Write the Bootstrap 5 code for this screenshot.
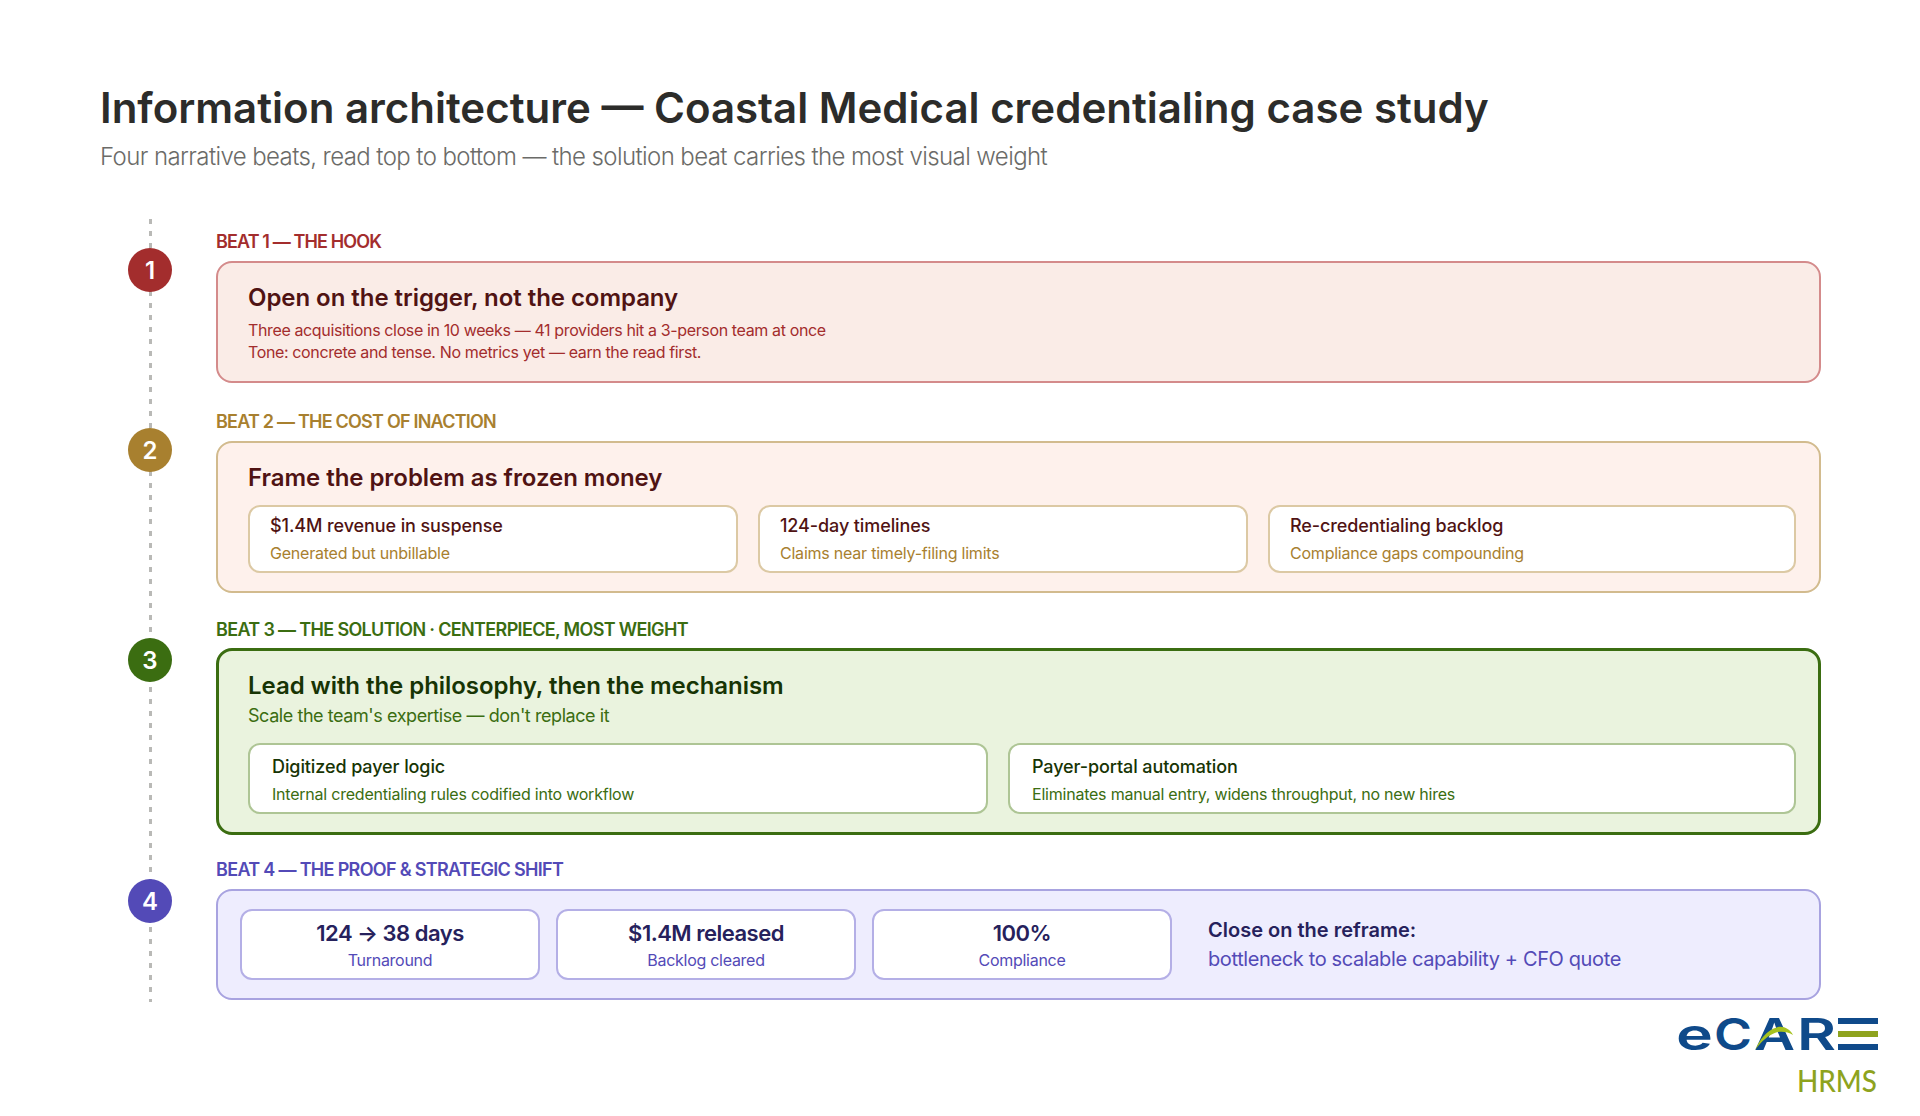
<!DOCTYPE html>
<html lang="en">
<head>
    <meta charset="UTF-8">
    <meta name="viewport" content="width=device-width, initial-scale=1.0">
    <title>Information architecture</title>
    <link href="https://cdn.jsdelivr.net/npm/bootstrap@5.3.0/dist/css/bootstrap.min.css" rel="stylesheet">
    <style>
        body { font-family: "Inter", "Liberation Sans", sans-serif; background: #fff; overflow: hidden; }
        .ia-page { padding: 84px 99px 0 100px; }
        .ia-title { font-size: 42px; line-height: 48px; font-weight: 600; color: #2c2c2a; margin: 0 0 9px; }
        .ia-sub { font-size: 24px; line-height: 32px; font-weight: 300; letter-spacing: -.6px; color: #6b6b68; margin: 0 0 46px; }
        .ia-track { padding: 11px 0 2px; }
        .ia-track::before { content: ""; position: absolute; left: 48.5px; top: 0; bottom: 0; width: 3px; background: repeating-linear-gradient(#b9b9b6 0 5px, transparent 5px 12px); }
        .beat-rail { width: 116px; flex: none; position: relative; }
        .beat-dot { width: 44px; height: 44px; margin-left: 28px; border-radius: 50%; color: #fff; font-size: 24px; font-weight: 600; padding-top: 1px; }
        .beat-label { font-size: 18px; line-height: 24px; font-weight: 600; }
        .beat-box { border-radius: 16px; border: 2px solid; }
        .beat-head { font-size: 24px; line-height: 32px; font-weight: 600; letter-spacing: -.05px; margin: 0; }
        .beat-copy { font-size: 16px; line-height: 22px; letter-spacing: -.37px; }
        .fact-tile { background: #fff; border: 2px solid; border-radius: 12px; }
        .fact-name { font-size: 18px; line-height: 24px; font-weight: 500; letter-spacing: -.1px; }
        .fact-note { font-size: 16px; line-height: 22px; margin-top: 4px; letter-spacing: -.22px; }

        .beat-hook { color: #a32d2d; }
        .beat-hook .beat-dot { background: #a32d2d; margin-top: 18px; }
        .beat-hook .beat-label { margin-bottom: 7px; letter-spacing: -.87px; }
        .beat-hook .beat-box { background: #faece7; border-color: #d48b8b; padding: 19px 30px 18px; }
        .beat-hook .beat-head { color: #501313; margin-bottom: 5px; }

        .beat-cost { color: #a8802f; margin-top: 27px; }
        .beat-cost .beat-dot { background: #a8802f; margin-top: 18px; }
        .beat-cost .beat-label { margin-bottom: 7px; letter-spacing: -.78px; }
        .beat-cost .beat-box { background: #fef1ec; border-color: #d2bb8e; padding: 19px 23px 18px 30px; }
        .beat-cost .beat-head { color: #501313; margin-bottom: 11px; }
        .beat-cost .fact-row { display: grid; grid-template-columns: 490px 490px 1fr; gap: 20px; }
        .beat-cost .fact-tile { border-color: #dcc9a4; padding: 7px 20px; }
        .beat-cost .fact-name { color: #501313; }

        .beat-fix { color: #3b6d11; margin-top: 25px; }
        .beat-fix .beat-dot { background: #3b6d11; margin-top: 20px; }
        .beat-fix .beat-label { margin-bottom: 6px; letter-spacing: -.66px; }
        .beat-fix .beat-box { background: #eaf3de; border: 3px solid #3b6d11; padding: 19px 22px 18px 29px; }
        .beat-fix .beat-head { color: #173404; margin-bottom: 2px; }
        .beat-fix .beat-lead { font-size: 18px; line-height: 24px; margin-bottom: 15px; letter-spacing: -.43px; }
        .beat-fix .fact-row { display: grid; grid-template-columns: 740px 1fr; gap: 20px; }
        .beat-fix .fact-tile { border-color: #aec595; padding: 10px 22px 7px; }
        .beat-fix .fact-name { color: #173404; }

        .beat-proof { color: #534ab7; margin-top: 23px; }
        .beat-proof .beat-dot { background: #534ab7; margin-top: 21px; }
        .beat-proof .beat-label { margin-bottom: 7px; letter-spacing: -.68px; }
        .beat-proof .beat-box { background: #eeedfe; border-color: #a8a3e0; padding: 18px 22px; }
        .stat-tile { width: 300px; background: #fff; border: 2px solid #b4afe6; border-radius: 12px; padding: 8px 0 7px; text-align: center; }
        .stat-num { font-size: 22px; line-height: 28px; font-weight: 600; letter-spacing: -.5px; color: #26215c; }
        .stat-note { font-size: 16px; line-height: 22px; margin-top: 2px; letter-spacing: -.28px; }
        .close-wrap { margin-left: 36px; }
        .close-title { font-size: 20px; line-height: 28px; font-weight: 600; color: #26215c; }
        .close-line { font-size: 20px; line-height: 30px; letter-spacing: -.38px; }

        .brand-foot { padding: 2px 20px 0 0; }
    </style>
</head>
<body>
    <main class="ia-page">
        <h1 class="ia-title">Information architecture — Coastal Medical credentialing case study</h1>
        <p class="ia-sub">Four narrative beats, read top to bottom — the solution beat carries the most visual weight</p>

        <div class="ia-track position-relative">
            <section class="beat-hook d-flex">
                <div class="beat-rail"><div class="beat-dot d-flex align-items-center justify-content-center">1</div></div>
                <div class="flex-grow-1">
                    <div class="beat-label">BEAT 1 — THE HOOK</div>
                    <div class="beat-box">
                        <h2 class="beat-head">Open on the trigger, not the company</h2>
                        <div class="beat-copy">Three acquisitions close in 10 weeks — 41 providers hit a 3-person team at once<br>Tone: concrete and tense. No metrics yet — earn the read first.</div>
                    </div>
                </div>
            </section>

            <section class="beat-cost d-flex">
                <div class="beat-rail"><div class="beat-dot d-flex align-items-center justify-content-center">2</div></div>
                <div class="flex-grow-1">
                    <div class="beat-label">BEAT 2 — THE COST OF INACTION</div>
                    <div class="beat-box">
                        <h2 class="beat-head">Frame the problem as frozen money</h2>
                        <div class="fact-row">
                            <div class="fact-tile">
                                <div class="fact-name">$1.4M revenue in suspense</div>
                                <div class="fact-note">Generated but unbillable</div>
                            </div>
                            <div class="fact-tile">
                                <div class="fact-name">124-day timelines</div>
                                <div class="fact-note">Claims near timely-filing limits</div>
                            </div>
                            <div class="fact-tile">
                                <div class="fact-name">Re-credentialing backlog</div>
                                <div class="fact-note">Compliance gaps compounding</div>
                            </div>
                        </div>
                    </div>
                </div>
            </section>

            <section class="beat-fix d-flex">
                <div class="beat-rail"><div class="beat-dot d-flex align-items-center justify-content-center">3</div></div>
                <div class="flex-grow-1">
                    <div class="beat-label">BEAT 3 — THE SOLUTION · CENTERPIECE, MOST WEIGHT</div>
                    <div class="beat-box">
                        <h2 class="beat-head">Lead with the philosophy, then the mechanism</h2>
                        <div class="beat-lead">Scale the team's expertise — don't replace it</div>
                        <div class="fact-row">
                            <div class="fact-tile">
                                <div class="fact-name">Digitized payer logic</div>
                                <div class="fact-note">Internal credentialing rules codified into workflow</div>
                            </div>
                            <div class="fact-tile">
                                <div class="fact-name">Payer-portal automation</div>
                                <div class="fact-note">Eliminates manual entry, widens throughput, no new hires</div>
                            </div>
                        </div>
                    </div>
                </div>
            </section>

            <section class="beat-proof d-flex">
                <div class="beat-rail"><div class="beat-dot d-flex align-items-center justify-content-center">4</div></div>
                <div class="flex-grow-1">
                    <div class="beat-label">BEAT 4 — THE PROOF &amp; STRATEGIC SHIFT</div>
                    <div class="beat-box d-flex align-items-center">
                        <div class="d-flex gap-3">
                            <div class="stat-tile">
                                <div class="stat-num">124 → 38 days</div>
                                <div class="stat-note">Turnaround</div>
                            </div>
                            <div class="stat-tile">
                                <div class="stat-num">$1.4M released</div>
                                <div class="stat-note">Backlog cleared</div>
                            </div>
                            <div class="stat-tile">
                                <div class="stat-num">100%</div>
                                <div class="stat-note">Compliance</div>
                            </div>
                        </div>
                        <div class="close-wrap">
                            <div class="close-title">Close on the reframe:</div>
                            <div class="close-line">bottleneck to scalable capability + CFO quote</div>
                        </div>
                    </div>
                </div>
            </section>
        </div>
    </main>

    <footer class="brand-foot d-flex justify-content-end">
        <svg width="224" height="106" viewBox="0 -14 224 106" role="img" aria-label="eCARE HRMS">
            <g fill="#0f4a8a" font-family="Inter, sans-serif" font-weight="600" font-size="44">
                <text x="0" y="32" textLength="37" lengthAdjust="spacingAndGlyphs">e</text>
                <text x="38" y="32" textLength="38" lengthAdjust="spacingAndGlyphs">C</text>
                <text x="78" y="32" textLength="41" lengthAdjust="spacingAndGlyphs">A</text>
                <text x="121" y="32" textLength="39" lengthAdjust="spacingAndGlyphs">R</text>
            </g>
            <rect x="162" y="0" width="40" height="6" fill="#0f4a8a"/>
            <rect x="162" y="13" width="40" height="6" fill="#8ea31e"/>
            <rect x="162" y="26" width="40" height="6" fill="#0f4a8a"/>
            <path d="M79 32C84 22 90 12 102 9C108 8 114 11 117 17C112 14 106 13 100 14.5C92 17 85 24 79 32Z" fill="#a6c21e"/>
            <text x="121" y="74" textLength="80" lengthAdjust="spacingAndGlyphs" fill="#8ea31e" font-family="Lato, sans-serif" font-weight="500" font-size="30">HRMS</text>
        </svg>
    </footer>

    <script src="https://cdn.jsdelivr.net/npm/bootstrap@5.3.0/dist/js/bootstrap.bundle.min.js"></script>
</body>
</html>
